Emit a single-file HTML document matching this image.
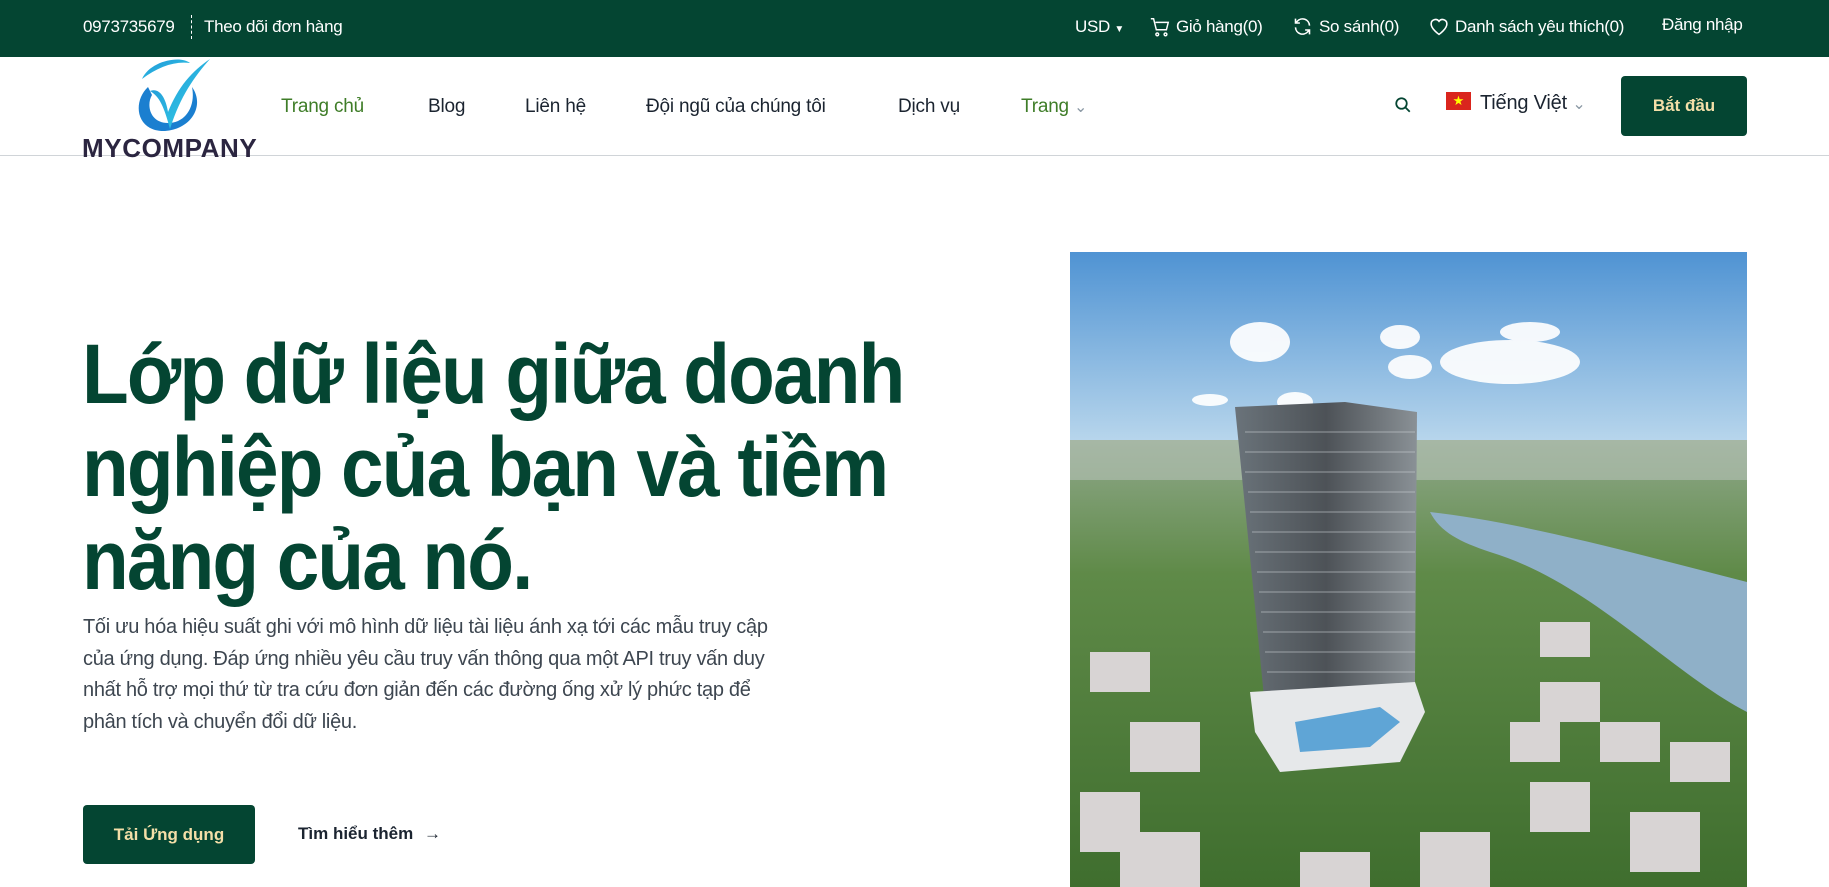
<!DOCTYPE html>
<html><head><meta charset="utf-8">
<style>
*{margin:0;padding:0;box-sizing:border-box}
body{width:1829px;height:887px;overflow:hidden;background:#fff;font-family:"Liberation Sans",sans-serif;position:relative}
.top{position:absolute;left:0;top:0;width:1829px;height:57px;background:#044532;color:#fff;font-size:17px}
.top span{position:absolute;top:17px;white-space:nowrap;letter-spacing:-0.3px}
.hdr{position:absolute;top:57px;left:0;width:1829px;height:99px;border-bottom:1px solid #d0d4d8;background:#fff}
.nav{position:absolute;top:39px;font-size:19px;color:#1b2430;white-space:nowrap;letter-spacing:-0.2px}
.btn{position:absolute;background:#044532;color:#f4dfa8;font-weight:bold;border-radius:4px;display:flex;align-items:center;justify-content:center}
h1{position:absolute;left:82px;top:328px;font-size:84px;line-height:93px;color:#044532;font-weight:bold;letter-spacing:-2px;white-space:nowrap;transform:scaleX(0.91);transform-origin:0 0}
p.d{position:absolute;left:83px;top:612px;width:700px;font-size:20px;line-height:31.5px;color:#3d4650;letter-spacing:-0.3px}
</style></head><body>
<div class="top">
<span style="left:83px">0973735679</span>
<div style="position:absolute;left:191px;top:15px;height:24px;border-left:1px dashed #fff"></div>
<span style="left:204px">Theo dõi đơn hàng</span>
<span style="left:1075px">USD <span style="position:relative;top:0;font-size:10px">▼</span></span>
<svg style="position:absolute;left:1149px;top:16px" width="22" height="22" viewBox="0 0 24 24" fill="none" stroke="#fff" stroke-width="1.6"><path d="M2 3h3l3 12h11l2-8H7"/><circle cx="9" cy="20" r="1.5"/><circle cx="18" cy="20" r="1.5"/></svg>
<span style="left:1176px">Giỏ hàng(0)</span>
<svg style="position:absolute;left:1292px;top:16px" width="21" height="21" viewBox="0 0 24 24" fill="none" stroke="#fff" stroke-width="1.8"><path d="M20 11a8 8 0 0 0-14-5L4 8M4 3v5h5M4 13a8 8 0 0 0 14 5l2-2M20 21v-5h-5"/></svg>
<span style="left:1319px">So sánh(0)</span>
<svg style="position:absolute;left:1428px;top:16px" width="22" height="21" viewBox="0 0 24 24" fill="none" stroke="#fff" stroke-width="1.8"><path d="M12 21s-9-6-9-12a5 5 0 0 1 9-3 5 5 0 0 1 9 3c0 6-9 12-9 12z"/></svg>
<span style="left:1455px">Danh sách yêu thích(0)</span>
<span style="left:1662px;top:15px">Đăng nhập</span>
</div>
<div class="hdr">
<svg style="position:absolute;left:128px;top:0" width="90" height="78" viewBox="0 0 86 78"><defs><linearGradient id="g" x1="0" y1="0" x2="1" y2="1"><stop offset="0" stop-color="#1e8fd6"/><stop offset="1" stop-color="#36d6e8"/></linearGradient></defs>
<path d="M12 22 C20 4 50 -2 60 6 C44 4 28 10 12 22z" fill="url(#g)"/>
<path d="M18 30 C2 45 6 75 35 74 C62 72 75 48 62 30 C66 50 55 66 38 66 C20 66 16 48 22 38z" fill="#1b7fd0"/>
<path d="M20 34 C30 30 36 42 38 55 C48 30 62 14 80 2 C64 20 50 40 40 72 C34 50 30 40 20 34z" fill="url(#g)"/></svg>
<div style="position:absolute;left:82px;top:76px;font-size:26px;font-weight:bold;color:#2b2540;letter-spacing:0.6px;line-height:30px">MYCOMPANY</div>
<span class="nav" style="left:281px;color:#3f7d28">Trang chủ</span>
<span class="nav" style="left:428px">Blog</span>
<span class="nav" style="left:525px">Liên hệ</span>
<span class="nav" style="left:646px">Đội ngũ của chúng tôi</span>
<span class="nav" style="left:898px">Dịch vụ</span>
<span class="nav" style="left:1021px;color:#3f7d28">Trang <span style="color:#8a98a4;font-size:16px">&#8964;</span></span>
<svg style="position:absolute;left:1394px;top:39px" width="18" height="18" viewBox="0 0 24 24" fill="none" stroke="#044532" stroke-width="2.4"><circle cx="10" cy="10" r="7"/><path d="M15 15l6 6"/></svg>
<div style="position:absolute;left:1446px;top:35px;width:25px;height:18px;background:#da251d;color:#ff0;font-size:13px;line-height:18px;text-align:center">★</div>
<span class="nav" style="left:1480px;top:35px;font-size:20px">Tiếng Việt <span style="color:#8a98a4;font-size:16px">&#8964;</span></span>
<div class="btn" style="left:1621px;top:19px;width:126px;height:60px;font-size:17px">Bắt đầu</div>
</div>
<h1>Lớp dữ liệu giữa doanh<br>nghiệp của bạn và tiềm<br>năng của nó.</h1>
<p class="d">Tối ưu hóa hiệu suất ghi với mô hình dữ liệu tài liệu ánh xạ tới các mẫu truy cập của ứng dụng. Đáp ứng nhiều yêu cầu truy vấn thông qua một API truy vấn duy nhất hỗ trợ mọi thứ từ tra cứu đơn giản đến các đường ống xử lý phức tạp để phân tích và chuyển đổi dữ liệu.</p>
<div class="btn" style="left:83px;top:805px;width:172px;height:59px;font-size:17px">Tải Ứng dụng</div>
<div style="position:absolute;left:298px;top:824px;font-size:17px;font-weight:bold;color:#1b2430">Tìm hiểu thêm <span style="font-weight:normal;margin-left:6px">→</span></div>
<svg style="position:absolute;left:1070px;top:252px" width="677" height="635" viewBox="0 0 677 635">
<defs><linearGradient id="sky" x1="0" y1="0" x2="0" y2="1"><stop offset="0" stop-color="#4f93d3"/><stop offset="1" stop-color="#b8d6ec"/></linearGradient>
<linearGradient id="gr" x1="0" y1="0" x2="0" y2="1"><stop offset="0" stop-color="#8fa88a"/><stop offset="0.3" stop-color="#5f8a48"/><stop offset="1" stop-color="#3f6e2e"/></linearGradient>
<linearGradient id="tw" x1="0" y1="0" x2="1" y2="0"><stop offset="0" stop-color="#6a737a"/><stop offset="0.5" stop-color="#4d5257"/><stop offset="1" stop-color="#8a9196"/></linearGradient></defs>
<rect width="677" height="190" fill="url(#sky)"/>
<g fill="#fff" opacity="0.92"><ellipse cx="190" cy="90" rx="30" ry="20"/><ellipse cx="330" cy="85" rx="20" ry="12"/><ellipse cx="440" cy="110" rx="70" ry="22"/><ellipse cx="340" cy="115" rx="22" ry="12"/><ellipse cx="225" cy="150" rx="18" ry="10"/><ellipse cx="140" cy="148" rx="18" ry="6"/><ellipse cx="460" cy="80" rx="30" ry="10"/></g>
<rect y="188" width="677" height="447" fill="url(#gr)"/>
<rect y="188" width="677" height="40" fill="#b6c2b8" opacity="0.6"/>
<path d="M360 260 C450 270 560 300 677 330 L677 460 C600 420 520 330 420 300 C390 290 370 280 360 260z" fill="#8fb0c8"/>
<g fill="#d8d4d4"><rect x="20" y="400" width="60" height="40"/><rect x="60" y="470" width="70" height="50"/><rect x="10" y="540" width="60" height="60"/><rect x="50" y="580" width="80" height="55"/><rect x="470" y="430" width="60" height="40"/><rect x="530" y="470" width="60" height="40"/><rect x="600" y="490" width="60" height="40"/><rect x="460" y="530" width="60" height="50"/><rect x="560" y="560" width="70" height="60"/><rect x="350" y="580" width="70" height="55"/><rect x="440" y="470" width="50" height="40"/><rect x="470" y="370" width="50" height="35"/><rect x="230" y="600" width="70" height="35"/></g>
<path d="M165 155 L275 150 L347 160 L345 430 L280 465 L195 455 Z" fill="url(#tw)"/>
<g stroke="#c9ced2" stroke-width="1" opacity="0.6"><path d="M175 180H345M175 200H345M175 220H345M178 240H345M180 260H345M182 280H345M185 300H345M187 320H345M189 340H345M191 360H345M193 380H345M195 400H345M197 420H345M199 440H300"/></g>
<path d="M180 440 L345 430 L355 460 L330 510 L210 520 L185 480 Z" fill="#e6e8ea"/>
<path d="M225 470 L310 455 L330 470 L300 495 L230 500z" fill="#5fa5d6"/>
</svg>
</body></html>
